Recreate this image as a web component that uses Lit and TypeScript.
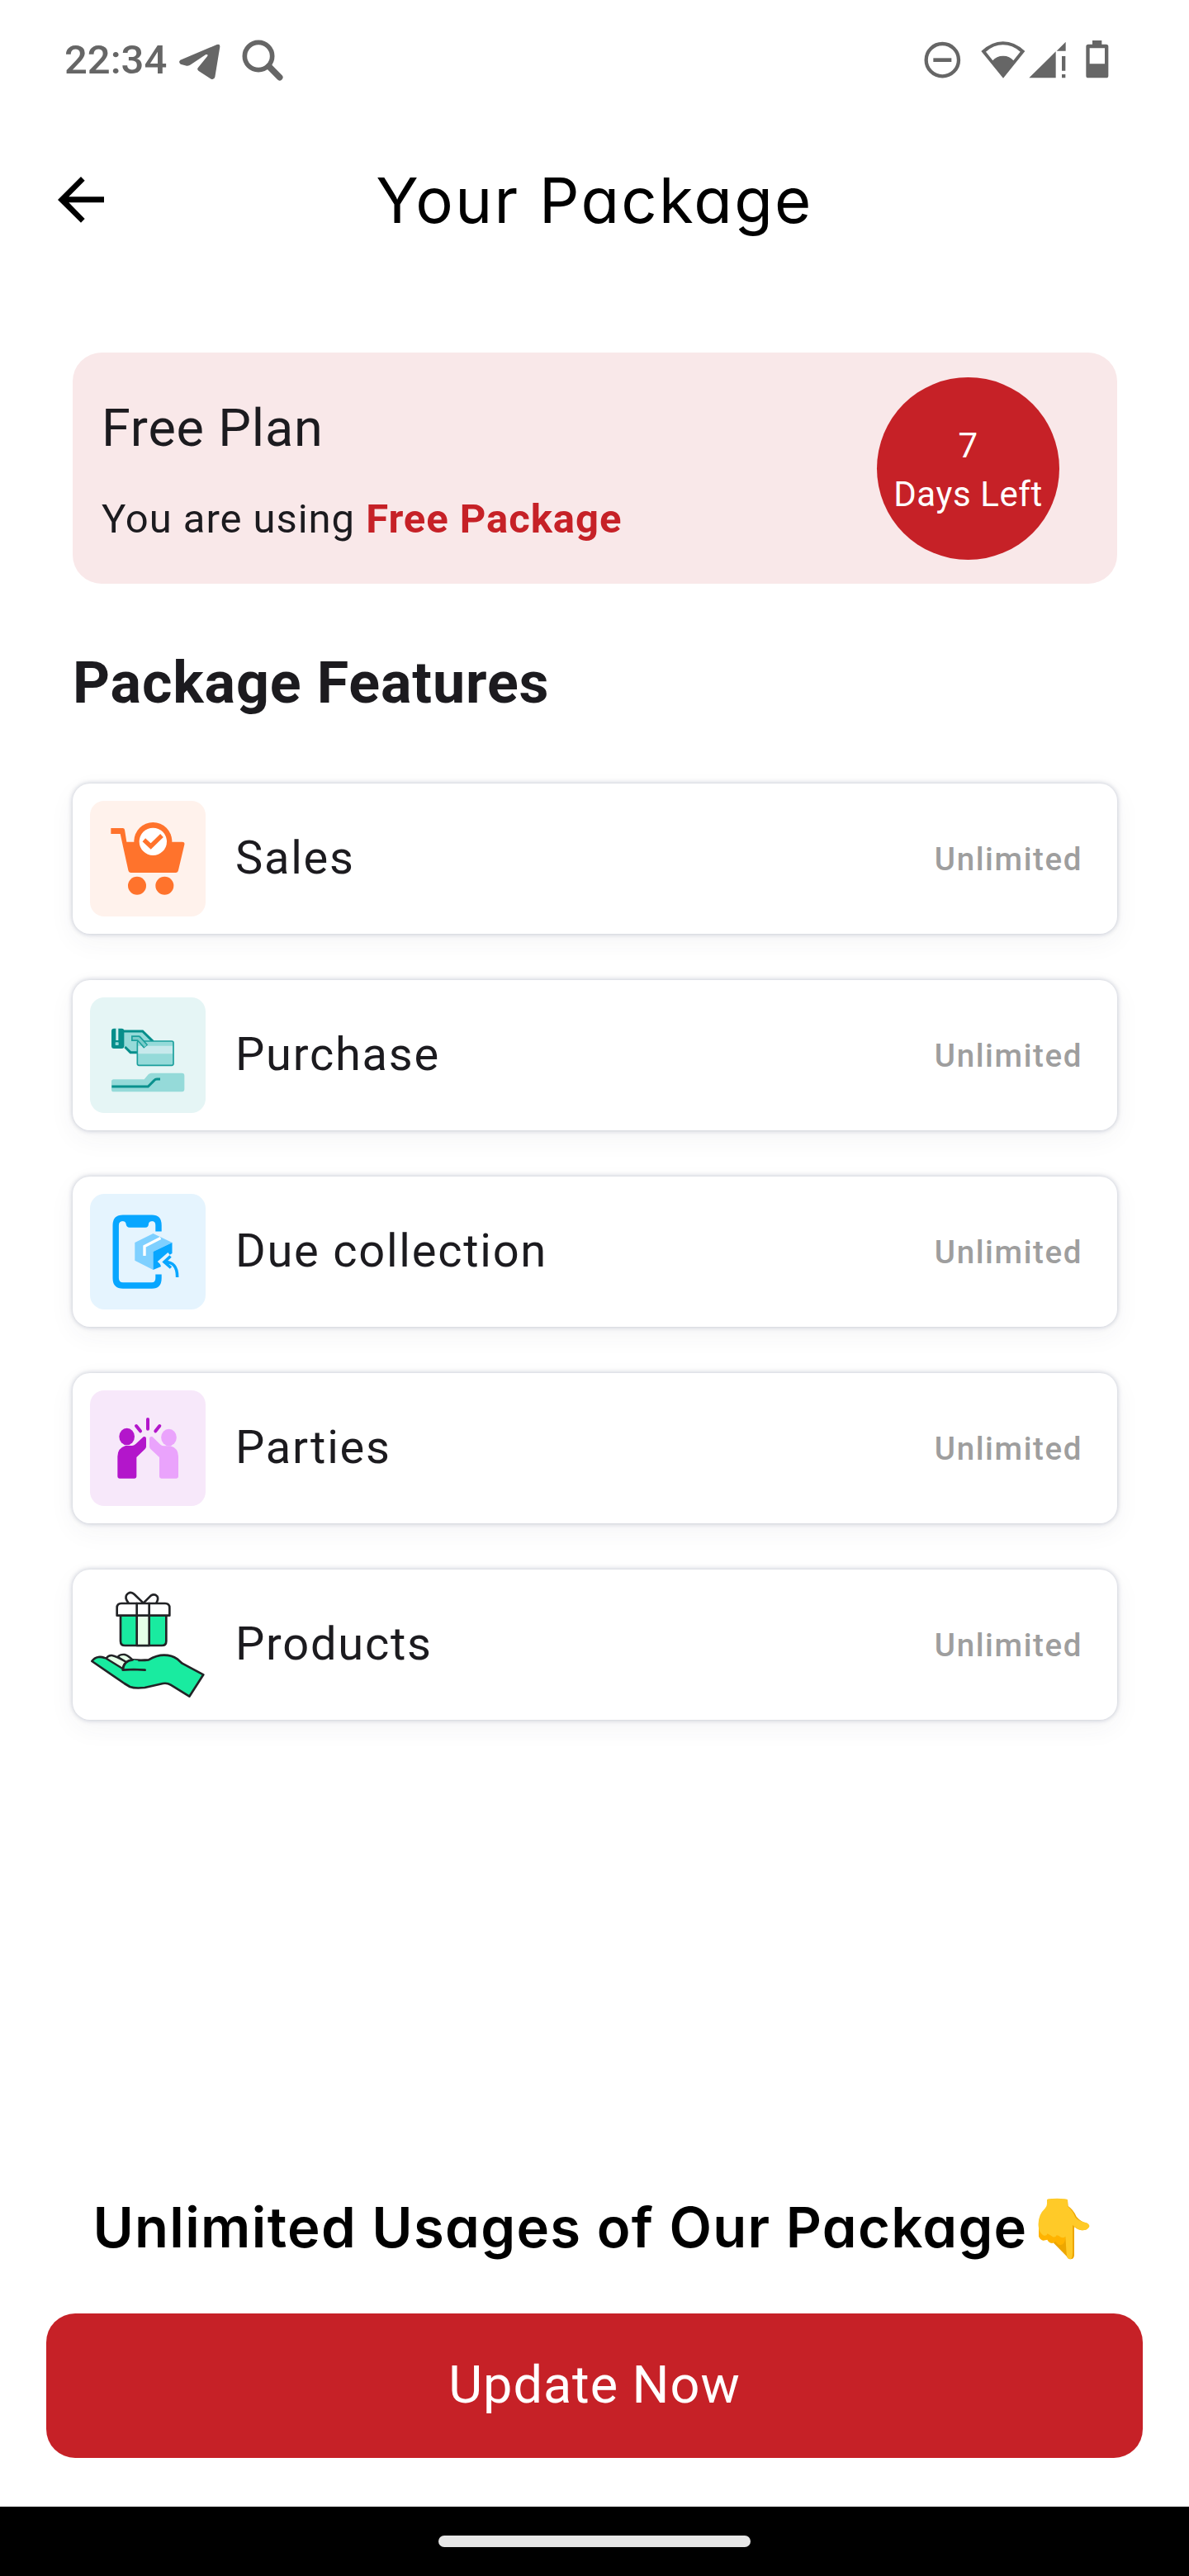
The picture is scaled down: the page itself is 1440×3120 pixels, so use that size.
import { LitElement, html, css, TemplateResult } from "lit";
import { customElement, property } from "lit/decorators.js";

const salesIcon = html`<svg viewBox="87 120 420 420" width="140" height="140">
  <rect x="87" y="120" width="420" height="420" rx="52" fill="#fff2ec" />
  <g fill="#ff732c">
    <path d="M163 219H206Q212 219 213 225L220 269H422Q432 269 430 279L408 372Q406 381 398 381H236Q228 381 226 372L197 240H163Z" />
    <circle cx="316" cy="267" r="69" />
    <circle cx="258" cy="428" r="33" />
    <circle cx="358" cy="428" r="33" />
  </g>
  <circle cx="316" cy="268" r="50" fill="#fff" />
  <path d="M283 262L308 285L348 246" fill="none" stroke="#ff732c" stroke-width="16" />
</svg>`;

const purchaseIcon = html`<svg viewBox="57 84 420 420" width="140" height="140">
  <rect x="57" y="84" width="420" height="420" rx="52" fill="#e5f5f5" />
  <path d="M180 207H248L290 248L230 284H204L180 262Z" fill="#95dad9" />
  <path d="M178 207H248L286 244M184 264L204 284H230" fill="none" stroke="#068e8b" stroke-width="9" />
  <rect x="135" y="197" width="46" height="73" rx="9" fill="#068e8b" />
  <path d="M151 195H160V240H151Z" fill="#d3efef" />
  <rect x="149" y="247" width="12" height="11" rx="2" fill="#95dad9" />
  <rect x="228" y="243" width="132" height="88" rx="6" fill="#95dad9" />
  <path d="M230 260H358V289H230Z" fill="#c8e9ec" />
  <rect x="229" y="243" width="131" height="88" rx="6" fill="none" stroke="#1b9f9c" stroke-width="5" />
  <path d="M207 233H234L260 263" fill="none" stroke="#1b9f9c" stroke-width="20" stroke-linejoin="round" />
  <path d="M212 233H233L259 261" fill="none" stroke="#7accca" stroke-width="10" stroke-linejoin="round" />
  <path d="M143 382H254L269 364Q273 359 280 359H391Q400 359 400 368V418Q400 427 391 427H143Q135 427 135 419V390Q135 382 143 382Z" fill="#95dad9" />
  <path d="M136 408H268L290 386Q294 381 300 381H312" fill="none" stroke="#0b918e" stroke-width="9" />
</svg>`;

const dueIcon = html`<svg viewBox="0 0 140 140" width="140" height="140">
  <rect width="140" height="140" rx="17.5" fill="#e5f4fe" />
  <path d="M83 45.5V38Q83 29.3 75 29.3H40Q31.2 29.3 31.2 38V102Q31.2 111 40 111H75Q83 111 83 102V97.5" fill="none" stroke="#08a6ff" stroke-width="7.4" />
  <path d="M33 27H81V37Q80.500 33 76 33Q71.500 33 71 36Q71 40.700 67 40.700H48Q44 40.700 43.500 36Q43 33 39 33Q34.500 33 34 38Z" fill="#08a6ff" />
  <path d="M76.500 48L99.500 59L76.500 70V92L54.300 80.700V59Z" fill="#7fd0ff" />
  <path d="M76.500 70L99.500 59V72L84 82L86 88L76.500 92Z" fill="#08a6ff" />
  <path d="M85.500 53.500L66 63.500V75" fill="none" stroke="#fff" stroke-width="3.400" />
  <path d="M96 73L85.500 82L96 92" fill="none" stroke="#e5f4fe" stroke-width="5" />
  <path d="M97.500 75.500L90 82.500L98 89.500M90 82.500Q106 82 105.600 101" fill="none" stroke="#08a6ff" stroke-width="3.600" />
</svg>`;

const partiesIcon = html`<svg viewBox="57 72 420 420" width="140" height="140">
  <rect x="57" y="72" width="420" height="420" rx="52" fill="#f7e8fa" />
  <g fill="#b316cb">
    <ellipse cx="191" cy="240" rx="28" ry="31" />
    <path d="M157 385V312Q157 282 186 273H210Q216 273 222 268L251 241Q261 238 261 249V277Q261 281 257 285L226 315V385Q226 392 219 392H164Q157 392 157 385Z" />
  </g>
  <g fill="#eaa3fc">
    <ellipse cx="343.500" cy="243" rx="28" ry="31" />
    <path d="M378 385V312Q378 282 349 274H325Q319 274 313 269L284 241Q273 238 273 249V277Q273 281 277 285L309 315V385Q309 392 316 392H371Q378 392 378 385Z" />
  </g>
  <path d="M267 177V212M225 201L240 220M310 201L295 220" stroke="#b316cb" stroke-width="12" stroke-linecap="round" />
</svg>`;

const productsIcon = html`<svg viewBox="87 96 420 420" width="140" height="140">
  <g stroke="#222326" stroke-width="8" stroke-linejoin="round" stroke-linecap="round" fill="#fff">
    <path d="M281 155L248 123Q237 112 225 120Q213 129 220 144L227 155M281 155L308 128Q321 120 331 130Q337 139 328 155" />
    <path d="M198 200H364V293Q364 309 348 309H214Q198 309 198 293Z" fill="#19eba0" />
    <path d="M257 200H302V309H257Z" fill="#e5ffe8" />
    <path d="M185 200V172Q185 156 201 156H360Q376 156 376 172V200Z" />
    <path d="M257 156V200M302 156V200" />
    <path d="M94 366Q103 353 117 351Q128 349 140 354L242 361Q274 364 300 361Q330 344 356 344Q384 344 404 358L422 374L499 415L448 494L380 452Q367 444 352 447L286 462Q250 466 232 459L212 447Z" fill="#19eba0" />
    <path d="M188 350Q197 340 213 342Q223 344 242 361L220 372Z" fill="#e5ffe8" stroke-width="7" />
    <path d="M146 356Q154 344 166 345Q180 346 220 370Q208 378 207 394Z" fill="#e5ffe8" stroke-width="7" />
    <path d="M242 361Q210 362 207 396L230 392L262 380V364Z" fill="#19eba0" stroke="none" />
    <path d="M242 361Q209 364 206 398L246 396L287 398" fill="none" />
  </g>
</svg>`;

interface Feature {
  name: string;
  limit: string;
  icon: TemplateResult;
}

const FEATURES: Feature[] = [
  { name: "Sales", limit: "Unlimited", icon: salesIcon },
  { name: "Purchase", limit: "Unlimited", icon: purchaseIcon },
  { name: "Due collection", limit: "Unlimited", icon: dueIcon },
  { name: "Parties", limit: "Unlimited", icon: partiesIcon },
  { name: "Products", limit: "Unlimited", icon: productsIcon },
];

@customElement("status-bar")
class StatusBar extends LitElement {
  static styles = css`
    :host {
      display: flex;
      align-items: center;
      height: 144px;
      box-sizing: border-box;
      padding: 0 97px 0 78px;
      color: #666;
      fill: #666;
      font: 500 49px/58px Roboto, sans-serif;
    }
    svg { display: block; flex: none; }
    .time { width: 139px; margin-top: 1px; }
    .plane, .search { margin-top: 1px; }
    .search { margin-left: 26px; }
    .dnd { margin-left: auto; }
    .wifi { margin-left: 24px; }
    .cell { margin-left: 4px; }
    .battery { margin-left: 24px; }
  `;
  render() {
    return html`
      <span class="time">22:34</span>
      <svg class="plane" width="50" height="50" viewBox="530 84 150 150">
        <path d="M534 158L667 102Q679 98 678 110L660 220Q657 231 646 227L601 198Q593 192 599 185L632 145Q637 136 627 138L572 175Q566 180 557 179L535 173Q526 166 534 158Z" />
      </svg>
      <svg class="search" width="50" height="50" viewBox="760 85 150 150">
        <g fill="none" stroke="#666">
          <circle cx="820" cy="145" r="50" stroke-width="17" />
          <path d="M858 182L897 222" stroke-width="23" stroke-linecap="round" />
        </g>
      </svg>
      <svg class="dnd" width="45" height="45" viewBox="86 90 135 135">
        <circle cx="153" cy="158" r="59" fill="none" stroke="#666" stroke-width="13" />
        <path d="M120 151H186V165H120Z" />
      </svg>
      <svg class="wifi" width="54" height="45" viewBox="293 90 162 135">
        <path fill-rule="evenodd" d="M374 224L294 126Q332 91 373 91Q416 91 453 126ZM336 160Q349 143 374 143Q398 143 411 160L436 128Q407 103 373 103Q340 103 311 128Z" />
      </svg>
      <svg class="cell" width="45" height="45" viewBox="466 90 135 135">
        <path d="M467 223L564 127V223ZM600 92V125H567ZM586 144H599V197H586ZM586 210H599V223H586Z" />
      </svg>
      <svg class="battery" width="28" height="46" viewBox="674 87 84 138">
        <path fill-rule="evenodd" d="M698 87H732V101H748Q756 101 756 109V215Q756 223 748 223H683Q675 223 675 215V109Q675 101 683 101H698ZM688 115V172H743V115Z" />
      </svg>
    `;
  }
}

@customElement("feature-card")
class FeatureCard extends LitElement {
  @property({ attribute: false }) feature!: Feature;
  static styles = css`
    :host {
      display: flex;
      align-items: center;
      height: 182px;
      box-sizing: border-box;
      padding: 0 42px 0 21px;
      border-radius: 21px;
      background: #fff;
      box-shadow: 0 0 6px rgba(12, 26, 75, 0.26), 0 10px 32px rgba(50, 50, 71, 0.05);
      font-family: Roboto, sans-serif;
    }
    svg { display: block; }
    .name {
      flex: 1;
      margin: 0 0 2px 36px;
      font-size: 56px;
      line-height: 66px;
      letter-spacing: 1.75px;
      color: #1c1b1f;
    }
    .limit {
      margin-top: 2px;
      font-size: 38.5px;
      line-height: 46px;
      font-weight: 500;
      letter-spacing: 1.6px;
      color: #9e9e9e;
    }
  `;
  render() {
    return html`${this.feature.icon}
      <span class="name">${this.feature.name}</span>
      <span class="limit">${this.feature.limit}</span>`;
  }
}

@customElement("app-root")
class AppRoot extends LitElement {
  static styles = css`
    :host {
      display: flex;
      flex-direction: column;
      width: 1440px;
      height: 3120px;
      background: #fff;
      color: #1c1b1f;
      font-family: Roboto, sans-serif;
    }
    .header {
      display: grid;
      grid-template-columns: 130px 1fr 130px;
      align-items: center;
      height: 196px;
      color: #000;
    }
    .back { display: block; margin-left: 70px; }
    .title {
      text-align: center;
      font: 400 76px/90px Inter, sans-serif;
      font-feature-settings: "cv11";
      letter-spacing: 2.3px;
    }
    .content { padding: 87px 87px 0 88px; }
    .plan {
      display: flex;
      align-items: center;
      justify-content: space-between;
      height: 280px;
      box-sizing: border-box;
      padding: 0 70px 0 35px;
      border-radius: 35px;
      background: #f9e8e9;
    }
    .plan-text { padding-top: 6px; }
    .plan-name { font-size: 63px; line-height: 74px; letter-spacing: 0.8px; }
    .plan-note { margin-top: 44px; font-size: 49px; line-height: 58px; letter-spacing: 0.95px; }
    .plan-note b { color: #c62127; }
    .days {
      display: flex;
      flex-direction: column;
      align-items: center;
      justify-content: center;
      width: 221px;
      height: 221px;
      box-sizing: border-box;
      padding-top: 3px;
      border-radius: 50%;
      background: #c62127;
      color: #fff;
      font-size: 42px;
      line-height: 59px;
      letter-spacing: 0.6px;
      white-space: nowrap;
    }
    .section { margin: 79px 0 81px; font-size: 70px; line-height: 82px; font-weight: 700; letter-spacing: 0.88px; }
    .features { display: flex; flex-direction: column; gap: 56px; }
    .footer { margin-top: auto; padding: 0 56px 59px; }
    .promo {
      display: flex;
      align-items: center;
      justify-content: center;
      gap: 12px;
      margin-bottom: 62px;
      padding-right: 8px;
      height: 84px;
      color: #000;
      font: 600 67px/84px Inter, sans-serif;
      font-feature-settings: "cv11";
      letter-spacing: 1.33px;
      white-space: nowrap;
    }
    .hand { flex: none; margin-top: 2px; }
    .update {
      display: flex;
      align-items: center;
      justify-content: center;
      width: 100%;
      height: 175px;
      padding: 0 0 1px;
      border: 0;
      border-radius: 35px;
      background: #c62127;
      color: #fff;
      font: 400 63px/74px Roboto, sans-serif;
      letter-spacing: 0.95px;
    }
    .nav {
      display: flex;
      align-items: center;
      justify-content: center;
      height: 84px;
      background: #000;
    }
    .pill { width: 378px; height: 14px; border-radius: 7px; background: #e6e6e6; }
  `;
  render() {
    return html`
      <status-bar></status-bar>
      <header class="header">
        <svg class="back" width="56" height="56" viewBox="90 582 168 168">
          <path d="M258 655V676H130L188 735L174 749L90 666L174 582L188 596L130 655Z" />
        </svg>
        <span class="title">Your Package</span>
      </header>
      <main class="content">
        <section class="plan">
          <div class="plan-text">
            <div class="plan-name">Free Plan</div>
            <div class="plan-note">You are using <b>Free Package</b></div>
          </div>
          <div class="days"><span>7</span><span>Days Left</span></div>
        </section>
        <div class="section">Package Features</div>
        <div class="features">
          ${FEATURES.map((f) => html`<feature-card .feature=${f}></feature-card>`)}
        </div>
      </main>
      <footer class="footer">
        <div class="promo">
          <span>Unlimited Usages of Our Package</span>
          <svg class="hand" width="63" height="75" viewBox="468 122 189 225">
            <path fill="#eda600" d="M576 130L578 152Q596 164 608 190Q625 210 646 214L655 224Q650 240 628 240Q612 238 600 228V330Q600 345 586 345Q576 344 573 335L500 260L560 140Z" />
            <path fill="#ffb300" d="M471 230V262Q477 276 488 277L502 274Q508 287 520 287L533 281Q540 294 551 293Q566 290 568 268V230Z" />
            <path fill="#ffca28" d="M501 129Q502 124 538 124Q575 124 576 129V152Q597 172 603 191Q612 206 642 212Q655 216 655 225Q652 240 627 240Q608 236 594 220V318Q594 345 586 345Q574 345 572 325L568 262Q560 270 549 264Q543 258 536 258Q531 269 520 262Q510 256 503 252Q498 264 486 257Q471 246 470 225Q467 185 494 160Q501 153 501 144Z" />
          </svg>
        </div>
        <button class="update">Update Now</button>
      </footer>
      <div class="nav"><div class="pill"></div></div>
    `;
  }
}
